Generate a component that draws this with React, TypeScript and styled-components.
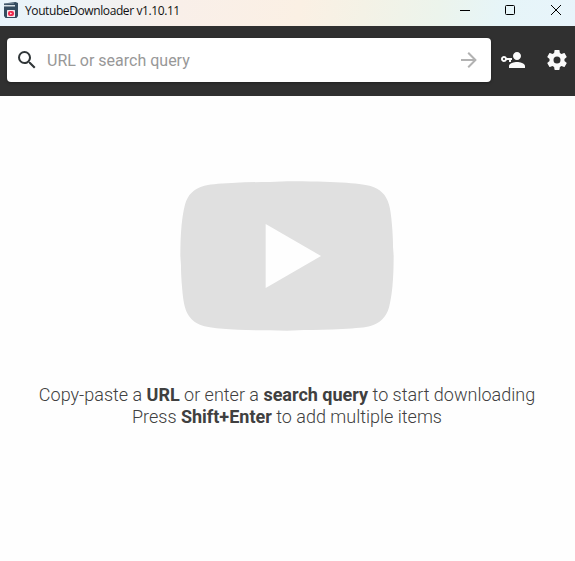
import React from 'react';
import styled, { createGlobalStyle } from 'styled-components';

const GlobalStyle = createGlobalStyle`
  * { box-sizing: border-box; }
  body { margin: 0; background: #fefefe; font-family: Roboto, sans-serif; overflow: hidden; }
`;

const Window = styled.div`
  display: flex;
  flex-direction: column;
  height: 100vh;
  background: #fefefe;
`;

const TitleBar = styled.header`
  display: flex;
  align-items: flex-start;
  flex: none;
  height: 26px;
  padding-left: 3px;
  background: linear-gradient(100deg, #e8f4fb 0%, #edf3f7 10%, #f9efe9 31%, #fbf0e4 52%, #f4f2e6 63%, #ecf4ec 76%, #e6f5f8 87%, #e8f4fb 100%);
`;

const Title = styled.h1`
  flex: 1;
  margin: 0 0 0 6px;
  font: 400 12px/21px 'Open Sans', sans-serif;
  letter-spacing: -0.4px;
  color: #111;
  white-space: nowrap;
`;

const AppIcon = styled.svg`
  width: 16px;
  height: 18px;
  margin-top: 1px;
`;

const CaptionButton = styled.button`
  display: flex;
  align-items: center;
  justify-content: center;
  width: 46px;
  height: 20px;
  padding: 0;
  border: 0;
  background: none;
`;

const Captions = styled.div`
  display: flex;
  margin-right: -4px;
`;

const Toolbar = styled.div`
  display: flex;
  align-items: center;
  flex: none;
  height: 70px;
  padding: 0 6px 2px 7px;
  background: #303030;
`;

const SearchBox = styled.label`
  display: flex;
  align-items: center;
  width: 484px;
  height: 44px;
  padding: 0 10px 0 8px;
  border-radius: 4px;
  background: #fff;
  box-shadow: 0 1px 3px rgba(0, 0, 0, 0.35);
`;

const SearchInput = styled.input`
  flex: 1;
  min-width: 0;
  margin: 0 0 0 8px;
  padding: 2px 0 0;
  border: 0;
  outline: 0;
  background: none;
  font: 400 16px/20px Roboto, sans-serif;
  color: #333;
  &::placeholder { color: #989898; opacity: 1; }
`;

const IconButton = styled.button<{ $gap?: number }>`
  display: flex;
  flex: none;
  margin: 0 0 0 ${(p) => p.$gap ?? 0}px;
  padding: 0;
  border: 0;
  background: none;
`;

const Glyph = styled.svg<{ $size?: number; $color: string }>`
  display: block;
  flex: none;
  width: ${(p) => p.$size ?? 24}px;
  height: ${(p) => p.$size ?? 24}px;
  fill: ${(p) => p.$color};
`;

const Content = styled.main`
  display: flex;
  flex-direction: column;
  align-items: center;
  flex: 1;
  padding: 32px 1px 0 0;
`;

const Hint = styled.p`
  margin: 0;
  font: 300 18px/22px Roboto, sans-serif;
  color: #404040;
  text-align: center;
  white-space: nowrap;
  strong { font-weight: 700; }
`;

const paths = {
  search:
    'M9.5,3A6.5,6.5 0 0,1 16,9.5C16,11.11 15.41,12.59 14.44,13.73L14.71,14H15.5L20.5,19L19,20.5L14,15.5V14.71L13.73,14.44C12.59,15.41 11.11,16 9.5,16A6.5,6.5 0 0,1 3,9.5A6.5,6.5 0 0,1 9.5,3M9.5,5C7,5 5,7 5,9.5C5,12 7,14 9.5,14C12,14 14,12 14,9.5C14,7 12,5 9.5,5Z',
  arrow: 'M4,11V13H16L10.5,18.5L11.92,19.92L19.84,12L11.92,4.08L10.5,5.5L16,11H4Z',
  account:
    'M11 10V12H10V14H8V12H5.83C5.42 13.17 4.31 14 3 14C1.34 14 0 12.66 0 11S1.34 8 3 8C4.31 8 5.42 8.83 5.83 10H11M3 10C2.45 10 2 10.45 2 11S2.45 12 3 12 4 11.55 4 11 3.55 10 3 10M16 14C18.67 14 24 15.34 24 18V20H8V18C8 15.34 13.33 14 16 14M16 12C13.8 12 12 10.21 12 8S13.8 4 16 4 20 5.79 20 8 18.21 12 16 12Z',
  cog:
    'M12,15.5A3.5,3.5 0 0,1 8.5,12A3.5,3.5 0 0,1 12,8.5A3.5,3.5 0 0,1 15.5,12A3.5,3.5 0 0,1 12,15.5M19.43,12.97C19.47,12.65 19.5,12.33 19.5,12C19.5,11.67 19.47,11.34 19.43,11L21.54,9.37C21.73,9.22 21.78,8.95 21.66,8.73L19.66,5.27C19.54,5.05 19.27,4.96 19.05,5.05L16.56,6.05C16.04,5.66 15.5,5.32 14.87,5.07L14.5,2.42C14.46,2.18 14.25,2 14,2H10C9.75,2 9.54,2.18 9.5,2.42L9.13,5.07C8.5,5.32 7.96,5.66 7.44,6.05L4.95,5.05C4.73,4.96 4.46,5.05 4.34,5.27L2.34,8.73C2.21,8.95 2.27,9.22 2.46,9.37L4.57,11C4.53,11.34 4.5,11.67 4.5,12C4.5,12.33 4.53,12.65 4.57,12.97L2.46,14.63C2.27,14.78 2.21,15.05 2.34,15.27L4.34,18.73C4.46,18.95 4.73,19.03 4.95,18.95L7.44,17.94C7.96,18.34 8.5,18.68 9.13,18.93L9.5,21.58C9.54,21.82 9.75,22 10,22H14C14.25,22 14.46,21.82 14.5,21.58L14.87,18.93C15.5,18.67 16.04,18.34 16.56,17.94L19.05,18.95C19.27,19.03 19.54,18.95 19.66,18.73L21.66,15.27C21.78,15.05 21.73,14.78 21.54,14.63L19.43,12.97Z',
  video:
    'M10,15L15.19,12L10,9V15M21.56,7.17C21.69,7.64 21.78,8.27 21.84,9.07C21.91,9.87 21.94,10.56 21.94,11.16L22,12C22,14.19 21.84,15.8 21.56,16.83C21.31,17.73 20.73,18.31 19.83,18.56C19.36,18.69 18.5,18.78 17.18,18.84C15.88,18.91 14.69,18.94 13.59,18.94L12,19C7.81,19 5.2,18.84 4.17,18.56C3.27,18.31 2.69,17.73 2.44,16.83C2.31,16.36 2.22,15.73 2.16,14.93C2.09,14.13 2.06,13.44 2.06,12.84L2,12C2,9.81 2.16,8.2 2.44,7.17C2.69,6.27 3.27,5.69 4.17,5.44C4.64,5.31 5.5,5.22 6.82,5.16C8.12,5.09 9.31,5.06 10.41,5.06L12,5C16.19,5 18.8,5.16 19.83,5.44C20.73,5.69 21.31,6.27 21.56,7.17Z',
};

function Icon({ name, color, size }: { name: keyof typeof paths; color: string; size?: number }) {
  return (
    <Glyph viewBox="0 0 24 24" $color={color} $size={size} aria-hidden>
      <path d={paths[name]} />
    </Glyph>
  );
}

export default function App() {
  return (
    <>
      <GlobalStyle />
      <Window>
        <TitleBar>
          <AppIcon viewBox="0 0 16 18" aria-hidden>
            <path d="M1 2.5L12.5 1l2.5 1v4H1z" fill="#344c60" />
            <path d="M1.5 2.9l9.500-.6" stroke="#8fa0ae" strokeWidth=".6" />
            <path d="M1 6h14v9l-1.500 2h-11L1 15z" fill="#344c60" />
            <path d="M1 4h11v1.500H1z" fill="#d5dee5" />
            <rect x="4" y="9" width="8" height="7" rx=".5" fill="#f4e9ee" />
            <rect x="5" y="10" width="6" height="5" rx="2" fill="#ee2b4f" />
            <path d="M7.200 11.500l1.800 1-1.800 1z" fill="#fff" />
          </AppIcon>
          <Title>YoutubeDownloader v1.10.11</Title>
          <Captions>
            <CaptionButton aria-label="Minimize">
              <svg width="12" height="10" fill="#000"><path d="M2 5h10v1H2z" /></svg>
            </CaptionButton>
            <CaptionButton aria-label="Maximize">
              <svg width="10" height="10" fill="none" stroke="#000"><rect x=".5" y=".5" width="9" height="9" rx="1" /></svg>
            </CaptionButton>
            <CaptionButton aria-label="Close">
              <svg width="10" height="10" fill="none" stroke="#000"><path d="M0 0l10 10M10 0L0 10" /></svg>
            </CaptionButton>
          </Captions>
        </TitleBar>
        <Toolbar>
          <SearchBox>
            <Icon name="search" color="#303638" />
            <SearchInput placeholder="URL or search query" />
            <IconButton aria-label="Process"><Icon name="arrow" color="#b2b2b2" /></IconButton>
          </SearchBox>
          <IconButton aria-label="Authentication" $gap={10}><Icon name="account" color="#fafafa" /></IconButton>
          <IconButton aria-label="Settings" $gap={20}><Icon name="cog" color="#fafafa" /></IconButton>
        </Toolbar>
        <Content>
          <Icon name="video" color="#e0e0e0" size={256} />
          <Hint>
            Copy-paste a <strong>URL</strong> or enter a <strong>search query</strong> to start downloading
            <br />
            Press <strong>Shift+Enter</strong> to add multiple items
          </Hint>
        </Content>
      </Window>
    </>
  );
}
